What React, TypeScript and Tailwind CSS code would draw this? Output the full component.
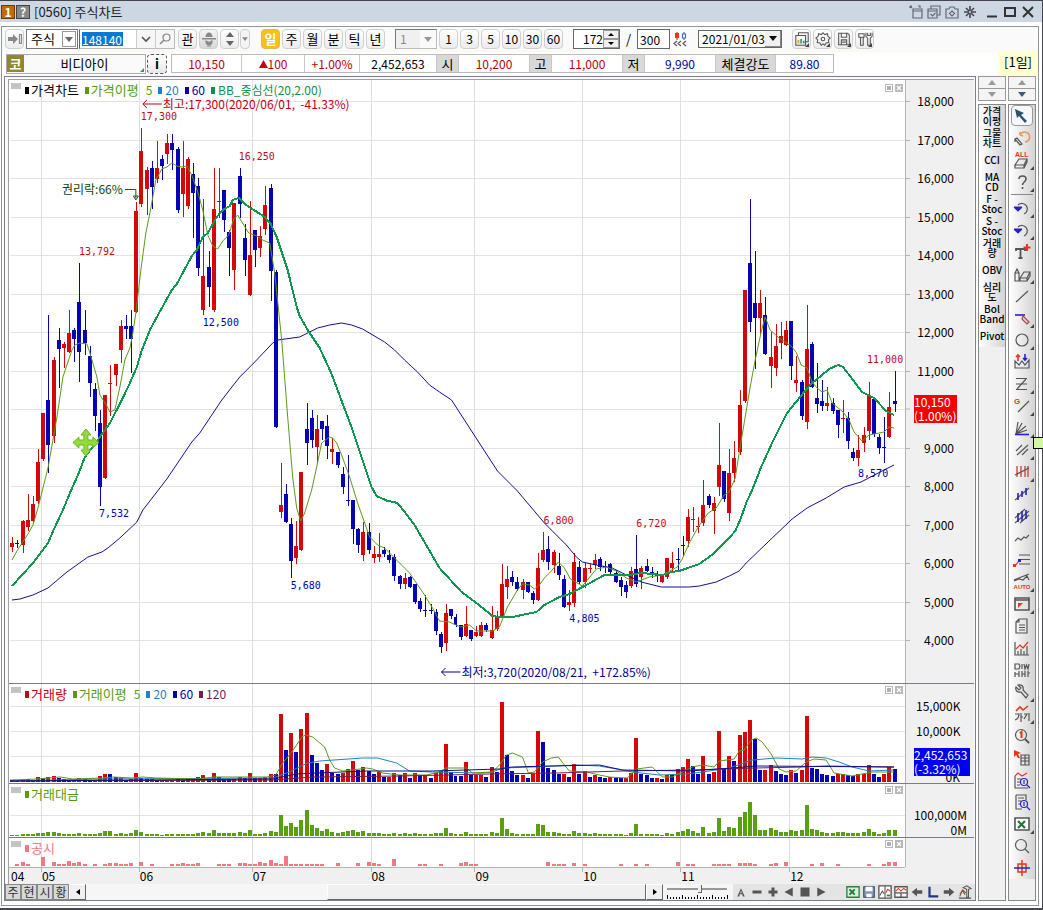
import type { ReactNode } from "react";

/* ---------- data ---------- */

const FIRST_X = 12.2;
const STEP = 5.166;
const xAt = (i: number) => Math.round(FIRST_X + STEP * i);

/* colour, high, body top, body bottom, low */
const CANDLES = `r537,543,547,551 b540,543,544,547 r520,521,545,552 r494,520,527,530 r496,504,521,521 r449,462,501,503
r413,413,459,460 b315,400,445,472 r357,360,436,442 b328,340,349,387 r342,344,348,367 r310,333,352,352
b328,330,339,361 b263,302,352,381 b310,330,343,354 b346,356,383,396 b383,389,416,430 b410,423,487,505
r395,395,478,478 r365,383,384,415 r364,364,375,385 r320,326,350,362 b315,326,329,338 b310,326,339,372
r202,211,312,312 r128,151,204,206 r167,170,189,214 b161,168,187,208 r141,168,179,182 b155,159,166,179
r134,143,154,163 b134,143,150,169 b147,149,210,212 r141,168,194,216 r157,159,206,208 b163,174,193,237
b178,186,268,275 r199,276,310,314 b251,267,287,306 r168,209,310,311 r168,201,202,217 b190,190,220,231
b230,232,248,275 r203,203,270,289 b168,176,204,217 b224,238,260,275 r201,255,295,295 b230,230,250,266
r226,236,248,256 r186,205,229,234 b184,188,271,300 b270,272,427,427 r463,505,512,517 b484,494,522,522
b518,524,561,577 r521,546,558,563 r472,472,550,550 b403,429,443,464 b410,418,440,447 r415,429,447,462
b421,421,429,439 b415,426,446,458 r438,449,452,463 b452,452,465,467 b467,474,487,493 b455,500,501,505
b500,500,529,543 b528,529,545,552 r522,532,555,560 b523,532,550,553 r546,554,558,562 r533,554,557,561
b547,550,554,556 b550,555,560,562 b554,557,576,580 b575,576,584,588 r573,578,584,588 b576,577,587,587
b584,584,602,603 b598,601,609,611 b595,610,611,616 b604,610,611,613 b609,612,631,634 b632,634,647,652
r604,613,643,650 b609,609,616,618 b614,617,625,626 b625,625,637,639 r606,624,636,636 b630,630,639,640
r626,632,636,636 r622,625,636,636 b623,625,630,631 r606,630,638,638 r611,616,629,630 r564,584,616,616
r566,579,587,598 b571,577,582,585 b577,582,589,590 r579,582,590,598 b582,582,592,592 b591,593,600,603
r553,568,600,600 r532,550,560,561 b536,549,562,569 r550,552,565,572 b553,566,575,579 b575,579,607,607
r590,602,605,610 r553,562,603,606 b561,567,582,583 r563,568,582,587 r564,568,569,572 r554,560,565,568
b557,559,567,570 b561,566,567,572 b563,564,572,573 b570,573,582,582 b577,580,587,595 b581,585,592,597
r567,571,586,587 b535,569,584,586 r566,568,577,588 b559,566,571,571 b567,572,574,577 b571,574,576,581
r574,574,582,582 r558,558,577,578 r552,563,568,570 b548,559,560,571 b536,545,546,555 r509,517,541,546
r507,519,520,531 r517,526,527,532 r480,505,523,525 b494,496,505,507 r497,503,511,533 r423,465,487,495
b471,471,499,501 r449,473,513,520 r441,458,473,481 r390,405,452,454 r290,290,401,402 b199,263,322,331
b251,303,318,368 r290,303,318,333 b297,315,354,354 r332,357,366,387 r324,346,368,375 r322,336,343,358
r321,330,345,345 b321,321,366,379 r356,380,383,391 b380,382,416,419 r305,349,422,428 b342,344,387,387
b363,398,404,412 b380,401,406,410 r387,403,406,410 b398,403,411,413 b410,410,425,437 r400,418,419,432
b412,418,441,448 b448,452,458,460 r435,450,458,465 r427,435,443,451 r382,396,431,439 b399,399,434,436
b434,437,448,453 b417,447,448,462 r392,407,437,437 b371,401,404,411`
  .split(/\s+/)
  .map((s) => ({ up: s[0] === "r", v: s.slice(1).split(",").map(Number) }));

const VOLUMES = [
  1.5, 1, 2.7, 2.5, 1.7, 4.7, 3.7, 5, 5.7, 4, 3, 2, 2, 3.5, 3, 2, 2, 5.5, 7.7, 7.5, 4.3, 4.5, 2, 3, 8.7, 4, 3, 3, 2, 2, 2, 2,
  3, 2, 2.5, 2.5, 4.5, 6.5, 3, 8.7, 4.5, 3, 2.5, 3, 5, 4, 8.7, 4, 4, 5, 7.5, 7.3, 67.7, 31.7, 48.7, 29.7, 52.7, 68.7, 26.7,
  18.7, 11.7, 17.7, 9, 8, 9, 12.5, 20.7, 12, 14.7, 11, 7.7, 10, 5, 5, 9, 6.5, 9, 4, 8.7, 6.5, 7, 4, 9, 11, 37.7, 9.5, 6, 5.7,
  19.7, 7, 7, 7, 5, 14.7, 10, 79.7, 27, 10.7, 7, 7, 4, 8, 50.7, 39.7, 14, 12, 8, 8, 5, 17.7, 8, 10.7, 5, 7, 5, 4, 4.5, 4, 3.5,
  3.5, 9, 43.7, 8, 7, 4, 4, 3, 7, 6.5, 12.7, 14.7, 22.7, 15.7, 8, 25.7, 8, 10, 50.7, 14, 25.7, 20.7, 46.7, 49.7, 61.7, 42.7,
  12, 12, 16.7, 11, 8, 7, 12, 9, 12, 65.7, 14, 12.7, 8, 7, 6, 8, 8, 7, 6, 7.5, 8, 16.7, 8, 5, 8, 14.5, 12.7,
];

const TURNOVER = [
  1, 1, 2, 2, 2, 3, 3, 4, 4, 3, 2, 2, 2, 3, 2, 2, 2, 3, 5, 5, 2, 3, 2, 3, 6, 4, 2, 2, 2, 1, 2, 2, 2, 2, 2, 2, 3, 4, 3, 6, 3, 3, 3,
  3, 4, 3, 6, 2, 2, 3, 5, 4, 21, 10, 13, 9, 16, 26, 11, 8, 5, 7, 4, 3, 4, 5, 6, 4, 5, 3, 3, 3, 2, 2, 3, 2, 3, 2, 3, 2, 2, 2, 3,
  3, 8, 3, 2, 2, 4, 2, 2, 2, 2, 4, 3, 18, 7, 3, 2, 2, 2, 2, 12, 11, 4, 4, 3, 2, 2, 5, 3, 3, 2, 3, 2, 2, 2, 2, 2, 1, 3, 12, 2, 2,
  2, 2, 1, 3, 2, 4, 5, 7, 5, 3, 9, 3, 4, 18, 5, 9, 8, 19, 24, 34, 21, 6, 6, 8, 6, 4, 4, 6, 5, 6, 31, 7, 6, 4, 3, 3, 4, 4, 3, 3,
  3, 4, 7, 4, 2, 3, 6, 6,
];

const NOTICES: [number, number][] = [
  [1, 2], [2, 4], [3, 2], [6, 9], [8, 4], [9, 2], [10, 2], [11, 5], [12, 3], [13, 4], [14, 2], [16, 2], [18, 2], [19, 3], [20, 3],
  [21, 2], [22, 2], [23, 3], [25, 4], [27, 2], [31, 2], [32, 2], [33, 3], [34, 2], [35, 2], [36, 3], [40, 2], [41, 2], [42, 2],
  [44, 3], [45, 3], [46, 2], [47, 2], [48, 4], [49, 3], [50, 6], [51, 3], [52, 2], [53, 10], [54, 2], [55, 2], [56, 2], [57, 2],
  [58, 2], [59, 2], [60, 2], [63, 3], [67, 3], [69, 4], [70, 3], [71, 2], [74, 7], [79, 2], [80, 2], [83, 2], [87, 3], [88, 4],
  [89, 2], [90, 2], [104, 4], [105, 2], [106, 2], [107, 2], [109, 3], [111, 2], [118, 2], [121, 2], [123, 2], [129, 4], [131, 2],
  [132, 2], [136, 2], [137, 2], [138, 2], [139, 2], [141, 3], [142, 3], [143, 3], [144, 2], [147, 2], [148, 3], [150, 4],
  [155, 2], [157, 3], [160, 2], [166, 2], [169, 2], [170, 4], [171, 4],
];

const MA5 =
  "12,560 17,551 22,543 28,534 33,525 38,508 43,488 48,468 53,440 57,417 63,377 72,350 75,345 80,343 87,344 90,353 97,377 100,395 107,406 110,412 115,410 120,387 125,360 130,348 133,333 136,313 141,270 146,233 151,208 156,180 162,169 167,167 172,163 177,166 182,167 187,166 192,175 198,192 203,210 208,235 213,246 218,249 223,241 229,235 234,219 238,215 244,225 249,233 257,236 263,240 270,243 275,273 282,340 288,417 293,477 297,508 301,521 305,513 312,490 317,467 322,443 330,437 333,438 337,443 342,455 350,477 358,503 363,517 370,537 378,545 385,548 397,560 410,573 425,595 433,608 440,621 450,622 461,627 470,625 477,631 493,631 500,627 508,607 518,590 523,584 530,585 535,589 540,585 545,578 552,571 559,562 565,568 571,579 583,586 588,580 597,569 607,567 617,571 627,578 637,582 650,577 663,575 678,567 683,559 690,543 699,527 709,513 717,508 725,495 730,492 736,478 740,453 745,423 751,387 756,360 762,332 766,317 771,330 780,338 792,346 797,352 802,365 808,368 813,382 818,388 823,392 828,390 833,403 844,412 850,420 855,432 863,441 870,435 885,432 890,427 895,428";
const MA20 =
  "12,586 33,563 48,543 55,527 63,510 70,493 78,475 85,457 100,437 110,423 122,400 130,383 137,367 142,350 150,330 157,317 172,290 177,284 192,256 197,250 203,237 208,233 217,217 223,210 230,206 233,200 239,198 245,204 265,217 271,224 277,237 288,270 297,307 300,316 308,330 320,348 332,374 342,401 353,430 363,460 372,487 377,496 388,501 395,502 399,504 415,525 440,568 462,592 477,603 493,616 500,617 513,617 537,612 545,605 560,597 570,594 587,585 605,575 630,575 642,573 663,575 672,572 680,571 700,564 714,554 730,538 736,531 741,520 747,503 753,490 762,467 772,445 788,413 805,392 813,383 823,375 830,369 839,365 844,367 863,392 875,398 887,411 895,415";
const MA60 =
  "12,600 20,599 33,595 48,588 67,572 88,557 102,552 108,548 120,538 137,522 143,510 157,492 167,479 192,442 200,433 222,400 240,377 255,362 273,343 278,340 300,337 318,328 330,325 342,323 352,325 363,329 385,342 395,350 405,360 418,372 430,385 440,392 452,400 498,471 518,491 545,523 567,545 577,557 583,562 597,565 613,568 627,575 642,582 662,587 690,587 700,586 717,582 730,576 740,571 747,563 772,539 793,519 808,508 827,498 845,487 862,482 883,471 895,465";

const VMA5 =
  "10,780 37,779 60,777 73,779 103,778 113,777 133,778 143,777 157,778 200,779 213,777 233,777 267,777 276,775 283,763 288,757 295,748 302,737 306,735 313,737 325,747 330,760 335,768 343,771 353,770 367,768 373,769 383,773 400,775 427,775 440,772 446,768 467,768 473,773 493,772 500,765 507,755 513,753 523,757 529,773 535,772 543,762 552,758 559,757 565,765 570,771 587,772 600,775 610,777 628,778 637,769 653,767 663,777 673,777 683,772 693,767 703,765 715,767 720,761 735,759 740,751 745,750 752,740 757,738 763,742 772,754 780,769 787,772 797,771 807,762 815,759 827,760 835,773 853,776 873,772 890,772 895,772";
const VMA20 =
  "10,781 100,779 273,778 287,773 308,763 320,761 363,758 378,758 397,763 410,771 433,772 483,773 493,772 503,768 533,767 557,766 577,765 600,766 623,770 633,772 660,775 687,774 703,772 730,768 753,760 777,758 803,759 813,757 827,758 840,762 853,767 870,771 895,770";
const VMA60 = "10,781 273,779 297,774 317,773 367,771 433,771 500,769 513,767 550,766 600,765 623,770 690,771 733,768 757,766 895,767";
const VMA120 = "10,781 273,780 313,777 400,776 447,775 490,774 557,773 623,771 690,770 757,768 803,767 827,766 895,767";

const MONTHS: [number, string][] = [[41, "05"], [139, "06"], [252, "07"], [371, "08"], [475, "09"], [583, "10"], [681, "11"], [790, "12"]];

/* ---------- chart pieces ---------- */

const X0 = 9;
const W = 897;
const left = (x: number) => `${((x - X0) / W) * 100}%`;

function Plot({ top, height, rows, children }: { top: number; height: number; rows: number[]; children: ReactNode }) {
  return (
    <svg
      className="absolute inset-0 h-full w-full"
      viewBox={`${X0} ${top} ${W} ${height}`}
      preserveAspectRatio="none"
      shapeRendering="crispEdges"
      aria-hidden="true"
    >
      {rows.map((y) => (
        <rect key={y} x={10} y={y} width={W} height={1} fill="#e3e3e3" />
      ))}
      {MONTHS.map(([x]) => (
        <rect key={x} x={x} y={top} width={1} height={height} fill="#dfdfdf" />
      ))}
      {children}
    </svg>
  );
}

function Line({ points, color, width = 1 }: { points: string; color: string; width?: number }) {
  return <polyline points={points} fill="none" stroke={color} strokeWidth={width} strokeLinejoin="round" />;
}

function PanelButtons() {
  return (
    <div className="absolute top-0.5 right-0.5 flex gap-0.5">
      <button aria-label="패널 최대화" className="flex size-2 items-center justify-center border border-[#b8b8b8] bg-white">
        <span className="size-1 bg-[#b0b0b0]" />
      </button>
      <button aria-label="패널 닫기" className="flex size-2 items-center justify-center bg-[#b8b8b8]">
        <svg viewBox="0 0 8 8" className="size-2">
          <path d="M2 2l4 4M6 2l-4 4" stroke="#fff" strokeWidth="1.2" />
        </svg>
      </button>
    </div>
  );
}

function Legend({ items }: { items: { mark?: string; color: string; text: string; small?: boolean }[] }) {
  return (
    <div className="absolute top-0.5 left-0.5 flex items-start">
      <span className="mt-px h-1.5 w-2.5 bg-[#c4c4c4]" />
      <div className="ml-1 flex items-center gap-1.5 text-[13px] leading-4">
        {items.map((it, i) => (
          <span key={i} className={`flex items-center gap-0.5 ${it.color}`}>
            {it.mark && <span className={`h-[7px] w-1 ${it.mark}`} />}
            <span className={it.small ? "pl-px text-xs leading-4" : ""}>{it.text}</span>
          </span>
        ))}
      </div>
    </div>
  );
}

function Note({ x, y, className, children }: { x: number; y: number; className: string; children: ReactNode }) {
  return (
    <span
      className={`absolute -translate-y-1/2 leading-3 whitespace-pre ${className}`}
      style={{ left: left(x), top: `${((y - 80) / 603) * 100}%` }}
    >
      {children}
    </span>
  );
}

const PRICE_TAG = "font-['DejaVu_Sans_Mono',monospace] text-[10px]";

function PricePanel() {
  const rows = Array.from({ length: 15 }, (_, i) => Math.round(101 + i * 38.5));
  return (
    <section className="flex min-h-[400px] flex-1" aria-label="가격차트">
      <div className="relative flex-1 bg-white">
        <Plot top={80} height={603} rows={rows}>
          {CANDLES.map(({ up, v: [h, t, b, l] }, i) => {
            const x = xAt(i);
            const c = up ? "#d40808" : "#0404b4";
            return (
              <g key={i} fill={c}>
                <rect x={x} y={h} width={1} height={l - h + 1} />
                <rect x={x - 2} y={t} width={4} height={Math.max(1, b - t)} />
              </g>
            );
          })}
          <Line points={MA60} color="#10108c" />
          <Line points={MA5} color="#5a9a18" />
          <Line points={MA20} color="#109850" width={2} />
          <path d="M143 104h19M143 104l4-4M143 104l4 4" stroke="#c00010" fill="none" />
          <path d="M442 672h19M442 672l4-4M442 672l4 4" stroke="#000090" fill="none" />
          <path d="M125 189.500h11v9M133.500 196l2.500 4 2.500-4z" stroke="#1c5a1c" fill="none" />
          <path
            d="M86 429l5 6h-3v5h5v-3l6 5.500-6 5.500v-3h-5v5h3l-5 6-5-6h3v-5h-5v3l-6-5.500 6-5.500v3h5v-5h-3z"
            fill="#8fdc3c"
            stroke="#6cb81e"
            shapeRendering="auto"
          />
        </Plot>
        <Legend
          items={[
            { mark: "bg-black", color: "text-black", text: "가격차트" },
            { mark: "bg-[#5a9a10]", color: "text-[#5a9a10]", text: "가격이평" },
            { color: "text-[#5a9a10]", text: "5", small: true },
            { mark: "bg-[#2080c8]", color: "text-[#2080c8]", text: "20", small: true },
            { mark: "bg-[#0000a8]", color: "text-[#0000a8]", text: "60", small: true },
            { mark: "bg-[#109048]", color: "text-[#109048]", text: "BB_중심선(20,2.00)", small: true },
          ]}
        />
        <div className="absolute top-0.5 right-0 h-3 w-6">
          <PanelButtons />
        </div>
        <Note x={163} y={104} className="text-xs text-[#c00010]">최고:17,300(2020/06/01,  -41.33%)</Note>
        <Note x={462} y={672} className="text-xs text-[#000090]">최저:3,720(2020/08/21,  +172.85%)</Note>
        <Note x={62} y={189} className="text-xs text-[#104810]">권리락:66%</Note>
        {(
          [
            [141, 117, "17,300"], [79, 252, "13,792"], [239, 157, "16,250"], [544, 521, "6,800"], [637, 524, "6,720"], [868, 360, "11,000"],
          ] as [number, number, string][]
        ).map(([x, y, s]) => (
          <Note key={s} x={x} y={y} className={`${PRICE_TAG} text-[#c80818]`}>{s}</Note>
        ))}
        {(
          [
            [203, 323, "12,500"], [99, 514, "7,532"], [291, 586, "5,680"], [570, 619, "4,805"], [859, 474, "8,570"],
          ] as [number, number, string][]
        ).map(([x, y, s]) => (
          <Note key={s} x={x} y={y} className={`${PRICE_TAG} text-[#0000b0]`}>{s}</Note>
        ))}
      </div>
      <div className="relative w-[69px] border-l border-[#b4b4b4] bg-[#f0f0f0] text-xs">
        {rows.map((y, i) => (
          <div
            key={y}
            className="absolute inset-x-0 flex -translate-y-1/2 items-center leading-4"
            style={{ top: `${((y - 80) / 603) * 100}%` }}
          >
            <span className="h-px w-1 bg-[#b4b4b4]" />
            {i !== 8 && <span className="w-11 text-right">{18 - i},000</span>}
          </div>
        ))}
        <div className="absolute top-[52.200%] left-2 w-[43px] bg-[#f80000] leading-3.5 text-white">
          10,150
          <br />
          (1.00%)
        </div>
      </div>
    </section>
  );
}

function VolumePanel() {
  return (
    <section className="flex h-[100px] border-t border-[#7c7c84]" aria-label="거래량">
      <div className="relative flex-1 bg-white">
        <Plot top={684} height={99} rows={[706, 731, 756]}>
          {VOLUMES.map((v, i) => (
            <rect
              key={i}
              x={xAt(i) - 2}
              y={781.6 - v}
              width={4}
              height={v}
              fill={i === 0 || v < VOLUMES[i - 1] ? "#0404b4" : "#d40808"}
            />
          ))}
          <Line points={VMA20} color="#2080c0" />
          <Line points={VMA5} color="#5a9a18" />
          <Line points={VMA120} color="#702050" />
          <Line points={VMA60} color="#10108c" />
        </Plot>
        <Legend
          items={[
            { mark: "bg-[#c80010]", color: "text-[#c80010]", text: "거래량" },
            { mark: "bg-[#5a9a10]", color: "text-[#5a9a10]", text: "거래이평" },
            { color: "text-[#5a9a10]", text: "5", small: true },
            { mark: "bg-[#2080c8]", color: "text-[#2080c8]", text: "20", small: true },
            { mark: "bg-[#0000a8]", color: "text-[#0000a8]", text: "60", small: true },
            { mark: "bg-[#702050]", color: "text-[#702050]", text: "120", small: true },
          ]}
        />
        <PanelButtons />
      </div>
      <div className="relative w-[69px] border-l border-[#b4b4b4] bg-[#f0f0f0] text-xs leading-4">
        <span className="absolute top-3.5 left-2.5">15,000K</span>
        <span className="absolute top-[39px] left-2.5">10,000K</span>
        <span className="absolute right-3.5 -bottom-0.5">0K</span>
        <div className="absolute top-16 left-2 w-[56px] bg-[#0000f0] leading-3.5 text-white">
          2,452,653
          <br />
          (-3.32%)
        </div>
      </div>
    </section>
  );
}

function TurnoverPanel() {
  return (
    <section className="flex h-[54px] border-t border-[#7c7c84]" aria-label="거래대금">
      <div className="relative flex-1 bg-white">
        <Plot top={784} height={53} rows={[815]}>
          {TURNOVER.map((v, i) => (
            <rect key={i} x={xAt(i) - 2} y={836 - v} width={4} height={v} fill="#58a010" />
          ))}
        </Plot>
        <Legend items={[{ mark: "bg-[#5a9a10]", color: "text-[#5a9a10]", text: "거래대금" }]} />
        <PanelButtons />
      </div>
      <div className="relative w-[69px] border-l border-[#b4b4b4] bg-[#f0f0f0] text-xs leading-4">
        <span className="absolute right-[7px] bottom-3.5">100,000M</span>
        <span className="absolute right-[7px] -bottom-px">0M</span>
      </div>
    </section>
  );
}

function NoticePanel() {
  return (
    <section className="flex h-[30px] border-t border-[#7c7c84]" aria-label="공시">
      <div className="relative flex-1 bg-white">
        <Plot top={838} height={29} rows={[]}>
          {NOTICES.map(([i, v]) => (
            <rect key={i} x={xAt(i) - 2} y={866 - v} width={4} height={v} fill="#f07880" />
          ))}
        </Plot>
        <Legend items={[{ mark: "bg-[#f07880]", color: "text-[#f07880]", text: "공시" }]} />
        <PanelButtons />
      </div>
      <div className="w-[69px] border-l border-[#b4b4b4] bg-[#f0f0f0]" />
    </section>
  );
}

function DateAxis() {
  return (
    <div className="flex h-[17px] bg-[#f0f0f0] text-xs leading-4">
      <div className="relative flex-1 border-t border-[#b4b4b4]">
        <span className="absolute left-0.5">04</span>
        {MONTHS.map(([x, m]) => (
          <span key={m} className="absolute" style={{ left: left(x) }}>
            <span className="absolute top-0 left-0 h-1 w-px bg-[#b4b4b4]" />
            <span className="pl-px">{m}</span>
          </span>
        ))}
      </div>
      <div className="w-[69px]" />
    </div>
  );
}

/* ---------- icons ---------- */

function Icon({ children, size = "size-4", box = 18 }: { children: ReactNode; size?: string; box?: number }) {
  return (
    <svg viewBox={`0 0 ${box} ${box}`} className={`${size} shrink-0`} fill="none" stroke="#555" strokeWidth="1.2" aria-hidden="true">
      {children}
    </svg>
  );
}

const R = "#e03818";
const B = "#2820c8";

const MINI_TEXT = "font-['Liberation_Sans',sans-serif] font-bold";

const TOOLS: { name: string; more?: boolean; icon: ReactNode }[] = [
  { name: "되돌리기 그리기", icon: <><path d="M7 6a5 5 0 1 1 5 7M7 6l0-3M7 6l3 1" stroke="#e89850" strokeWidth="1.500" /><path d="M2 10l2-1 5 6-2 1zM2 10v3" /></> },
  { name: "전체 지우기", more: true, icon: <><text x="2" y="6" fontSize="7" stroke="none" fill={R} className={MINI_TEXT}>ALL</text><path d="M2 14l4-6h8l-3 6zM2 14v3h9v-3M11 17l3-6V8" /></> },
  { name: "도움말", more: true, icon: <path d="M6 6c0-4 7-4 7 0 0 3-3.500 3-3.500 6M9.500 14v2" strokeWidth="1.600" /> },
  { name: "실행 취소", more: true, icon: <><path d="M5 6a5.500 5.500 0 1 1 6 9" /><path d="M1 8h8M2 9h6l-3 3z" stroke={B} fill={B} /></> },
  { name: "다시 실행", more: true, icon: <><path d="M5 6a5.500 5.500 0 1 1 6 9" /><path d="M1 8h8M2 9h6l-3 3z" stroke={B} fill={B} /></> },
  { name: "문자", icon: <><path d="M3 8V6h9v2M7.500 6v9M5.500 15h4" strokeWidth="1.800" /><path d="M14 1v7M10.500 4.500h7" stroke={R} strokeWidth="2" /></> },
  { name: "선 지우개", more: true, icon: <path d="M2 8l2-4 2 4v8H2zM2 8h4M7 13l4-6h6l-3 6zM7 13v3h7v-3M14 16l3-5V7" /> },
  { name: "추세선", icon: <path d="M3 15L15 4" /> },
  { name: "지우개", more: true, icon: <><path d="M2 6h10" stroke={B} strokeWidth="1.600" /><path d="M10 7l6 6-2 2-5-5z" stroke="#b04050" /></> },
  { name: "원", more: true, icon: <circle cx="9" cy="9" r="6" /> },
  { name: "패턴", icon: <><path d="M2 15V8l4 4 3-4 3 4 4-5v8z" /><path d="M5 8V2M3 4l2-2 2 2" stroke={R} strokeWidth="1.600" /><path d="M12 1v6M10 5l2 2 2-2" stroke={B} strokeWidth="1.600" /></> },
  { name: "수평 추세", more: true, icon: <path d="M3 3.500h11M3 9h11M3 14.500h11M13 4L4 14" /> },
  { name: "각도선", more: true, icon: <><text x="1" y="7" fontSize="8" stroke="none" fill={R} className={MINI_TEXT}>G</text><path d="M5 15L16 4" /></> },
  { name: "부채꼴", more: true, icon: <><path d="M3 15L5 3M3 15l6-11M3 15l10-8M3 15l11-4" /><path d="M2 15.500h14" stroke={B} strokeWidth="1.600" /></> },
  { name: "평행선", more: true, icon: <path d="M3 10l6-6M4 14L15 4M9 14l6-6" /> },
  { name: "주기선", more: true, icon: <><path d="M4 3v11M8 3v11M12 3v11M15 3v11" stroke="#c03828" /><path d="M2 12L16 5" /></> },
  { name: "회귀선", icon: <><path d="M2 15L16 3" /><path d="M5 8v7M9 6v6M13 3v7" stroke={B} strokeWidth="1.600" /></> },
  { name: "회귀 채널", icon: <><path d="M2 11L12 2M2 16L16 4M7 16l9-8" /><path d="M5 6v9M9 4v10M13 3v9" stroke={B} strokeWidth="1.600" /></> },
  { name: "지그재그", icon: <path d="M2 12l3-3 3 2 3-3 2 1 3-3" /> },
  { name: "가격선", icon: <><path d="M6 4h11M8 8.500h9M6 13h11" /><path d="M2 15l4-5" stroke={R} /><path d="M5 8h3v3H5z" fill={B} stroke="none" /><path d="M0 13h3v3H0z" fill={R} stroke="none" /></> },
  { name: "자동 추세", more: true, icon: <><path d="M1 7L16 1M1 8l5-2 4 1 4-4 2 4" /><text x="9" y="16" fontSize="6" textAnchor="middle" stroke="none" fill={R} className={MINI_TEXT}>AUTO</text></> },
  { name: "창", more: true, icon: <><path d="M2 3h14v12H2zM2 5h14" strokeWidth="1.600" /><path d="M5 8h5l-5 5z" fill={R} stroke="none" /></> },
  { name: "문서", icon: <path d="M6 2h8v14H3V5zM6 2v3H3M6 8h6M6 10.500h6M6 13h6" /> },
  { name: "비교차트", icon: <><path d="M2 3v13h14M5 16v-4M8 16v-6M11 16v-4M14 16V7" /><path d="M3 10l4-4 3 3 5-6" stroke={R} /></> },
  { name: "매매표시", icon: <path d="M2 3h4l1 2-1 3H2zM9 3v5M11 3l1 5 1.500-4 1.500 4 1-5M2 11v5M2 13h4M6 10v6M9 10v6M9 13h3M12 10v6M15 10v6M15 12h2" /> },
  { name: "설정", more: true, icon: <path d="M3 4l3 3 2-2-3-3c4-1 6 2 5 5l5 5-2 3-5-6c-4 1-6-2-5-5z" /> },
  { name: "가격 표시", more: true, icon: <><path d="M3 6l4-4 3 3 5-4" stroke={R} strokeWidth="1.600" /><path d="M2 9h4c0 3-1 5-4 6M8 8v9M8 12h2M11 9h3l-3 5M16 8v8" /></> },
  { name: "종목 검색", icon: <><circle cx="8" cy="8" r="5.500" /><path d="M12 12l4 4" strokeWidth="2" /><path d="M7 6.500l1.500-1.500v6" stroke={R} strokeWidth="2" /></> },
  { name: "영역 선택", icon: <><path d="M8 6h8v10H8zM8 9h8M8 12h8M12 6v10" /><path d="M1 1l7 3-3 1 2 4-2 0-2-3-2 2z" fill={R} stroke="none" /></> },
  { name: "차트 검색", icon: <><path d="M2 5v12h13M4 8h4M4 11h3M4 14h3" /><path d="M2 5l3-3 4 3 5-3" stroke={R} /><circle cx="11" cy="11" r="3.500" stroke={B} /><path d="M14 14l3 3M11 9v4" stroke={B} /></> },
  { name: "목록 검색", icon: <><path d="M3 2h10v5M3 2v14h6M5 5h6M5 8h3M5 11h2" /><circle cx="11" cy="11" r="3.500" stroke={B} /><path d="M14 14l3 3M11 9v4" stroke={B} /></> },
  { name: "엑셀", more: true, icon: <><path d="M2 3h14v12H2z" strokeWidth="1.600" fill="#fff" /><path d="M5 6l7 7M12 6l-7 7" stroke="#1f7a3a" strokeWidth="2.200" /></> },
  { name: "확대", icon: <><circle cx="8" cy="8" r="5.500" /><path d="M12 12l4 4" /></> },
  { name: "십자선", icon: <><path d="M5 5h8v8H5zM9 1v16" stroke={R} strokeWidth="1.500" /><path d="M1 9h16" stroke={B} strokeWidth="1.500" /></> },
];

/* ---------- toolbar ---------- */

const BTN = "flex h-5 w-[19px] shrink-0 items-center justify-center rounded border leading-4";
const TONES = {
  plain: "border-[#cfcfcf] bg-linear-to-b from-white to-[#ececec]",
  dark: "border-[#cfcfcf] bg-linear-to-b from-[#f4f4f4] to-[#d8d8d8]",
  active: "border-[#d8b860] bg-[#fcc010] font-bold text-white",
};

function TBtn({ label, tone = "plain", className = "text-[13px]", children }: { label: string; tone?: keyof typeof TONES; className?: string; children?: ReactNode }) {
  return (
    <button aria-label={label} className={`${BTN} ${TONES[tone]} ${className}`}>
      {children ?? label}
    </button>
  );
}

function Down({ fill = "#666" }: { fill?: string }) {
  return (
    <svg viewBox="0 0 8 5" className="h-[5px] w-2" aria-hidden="true">
      <path d="M0 0h8L4 5z" fill={fill} />
    </svg>
  );
}

function Up({ fill = "#666" }: { fill?: string }) {
  return (
    <svg viewBox="0 0 8 5" className="h-[5px] w-2" aria-hidden="true">
      <path d="M0 5h8L4 0z" fill={fill} />
    </svg>
  );
}

function Corner() {
  return (
    <svg viewBox="0 0 5 5" className="absolute right-px bottom-px size-1" aria-hidden="true">
      <path d="M5 0v5H0z" fill="#444" />
    </svg>
  );
}

function Toolbar() {
  return (
    <div className="flex h-6 shrink-0 items-center bg-[#fafafa] pl-[3px]">
      <TBtn label="종목창 열기">
        <Icon box={16}>
          <path d="M1 6h5V3l5 5-5 5v-3H1z" fill="#888" stroke="none" />
          <path d="M12.500 3.500h2v9h-2z" stroke="#888" />
        </Icon>
      </TBtn>
      <div className="relative ml-0.5 h-5 w-[52px] border border-[#777] bg-white">
        <select aria-label="상품 구분" className="block h-full w-full appearance-none bg-transparent pl-1 text-[13px] leading-4">
          <option>주식</option>
        </select>
        <span className="pointer-events-none absolute inset-y-px right-px flex w-3.5 items-center justify-center border border-[#999]">
          <Down />
        </span>
      </div>
      <div className="ml-px flex h-5 items-center border border-[#bbb] border-l-[#666] bg-white pl-0.5">
        <input aria-label="종목코드" defaultValue="148140" className="h-3.5 w-[41px] bg-[#0a78d0] text-xs leading-3 text-white" />
        <button aria-label="종목 목록" className="ml-[13px] flex h-full w-[19px] items-center justify-center border-l border-[#ccc] bg-[#f6f6f6]">
          <Icon size="size-3" box={12}><path d="M2 4l4 4 4-4" strokeWidth="1.600" /></Icon>
        </button>
        <button aria-label="종목 찾기" className="flex h-full w-[19px] items-center justify-center border-l border-[#ccc] bg-[#f6f6f6]">
          <Icon size="size-3" box={12}><circle cx="7.500" cy="4.500" r="3.500" stroke="#888" /><path d="M5 7l-4 4" stroke="#888" strokeWidth="1.600" /></Icon>
        </button>
      </div>
      <div className="ml-[3px] flex gap-0.5">
        <TBtn label="관" />
        <TBtn label="투자자" tone="dark">
          <Icon box={16}><path d="M4.500 6c0-6 7-6 7 0zM1 7h14v1.500H1z" fill="#888" stroke="none" /><path d="M5 10c0 5 6 5 6 0l-3 1.500zM6 15h4" fill="#888" stroke="#888" /></Icon>
        </TBtn>
        <TBtn label="이전 다음 종목" className="flex-col gap-1">
          <Up />
          <Down />
        </TBtn>
        <button aria-label="더보기" className="-ml-px flex h-5 w-2.5 items-center justify-center rounded border border-[#cfcfcf] bg-[#f4f4f4]">
          <svg viewBox="0 0 8 5" className="h-1 w-1.5"><path d="M0 0h8L4 5z" fill="#888" /></svg>
        </button>
      </div>
      <div className="ml-[11px] flex gap-0.5">
        <TBtn label="일" tone="active" />
        {["주", "월", "분", "틱", "년"].map((t) => (
          <TBtn key={t} label={t} />
        ))}
      </div>
      <div className="relative ml-2.5 h-5 w-[42px]">
        <select aria-label="주기 값" disabled className="block h-full w-full appearance-none border border-[#bbb] border-t-[#777] border-l-[#777] bg-[#f0f0f0] pl-1 text-xs text-[#888]">
          <option>1</option>
        </select>
        <span className="pointer-events-none absolute inset-y-px right-px flex w-4 items-center justify-center bg-[#fafafa]">
          <Down fill="#999" />
        </span>
      </div>
      <div className="ml-0.5 flex gap-0.5">
        {["1", "3", "5", "10", "30", "60"].map((t) => (
          <TBtn key={t} label={t} className="text-xs" />
        ))}
      </div>
      <div className="ml-2.5 flex h-5 w-[47px] border border-[#666] bg-white">
        <input aria-label="표시 봉수" defaultValue="172" className="w-[29px] bg-transparent text-right text-xs" />
        <div className="flex flex-1 flex-col bg-[#f0f0f0]">
          <button aria-label="봉수 증가" className="flex flex-1 items-center justify-center border border-[#999]">
            <svg viewBox="0 0 6 3" className="h-[3px] w-1.5"><path d="M0 3h6L3 0z" /></svg>
          </button>
          <button aria-label="봉수 감소" className="flex flex-1 items-center justify-center border border-[#999]">
            <svg viewBox="0 0 6 3" className="h-[3px] w-1.5"><path d="M0 0h6L3 3z" /></svg>
          </button>
        </div>
      </div>
      <span className="px-1.5 text-[13px]">/</span>
      <input aria-label="전체 봉수" defaultValue="300" className="h-5 w-[33px] border border-[#666] bg-white pl-0.5 text-xs leading-4" />
      <button aria-label="봉 조절" className="ml-0.5">
        <Icon box={16}>
          <path d="M5 1v8" stroke={R} /><path d="M3 2h4v5H3z" fill={R} stroke="none" />
          <path d="M12 1v8" stroke="#4070b0" /><path d="M10.500 3h3v4h-3z" stroke="#4070b0" fill="#fff" />
          <path d="M5 10l-3 2.500 3 2.500M9 10l-3 2.500 3 2.500M14 10l-3 2.500 3 2.500" />
        </Icon>
      </button>
      <div className="relative ml-2.5 h-[18px] w-[84px] border border-[#666] bg-white">
        <select aria-label="기준일" className="block h-full w-full appearance-none pl-[3px] text-xs leading-4">
          <option>2021/01/03</option>
        </select>
        <span className="pointer-events-none absolute inset-y-0 right-0 flex w-4 items-center justify-center border-r border-b border-[#888] bg-[#f0f0f0]">
          <Down fill="#000" />
        </span>
      </div>
      <div className="ml-2.5 flex gap-0.5">
        <TBtn label="차트 유형" className="relative">
          <Icon box={18}><path d="M5 5V2h11v10h-3M2 5h11v11H2z" /><path d="M5 14v-4" stroke="#e0a020" strokeWidth="2" /><path d="M8 14V9" stroke="#40a070" strokeWidth="2" /><path d="M11 14v-3" stroke="#4080c0" strokeWidth="2" /></Icon>
          <Corner />
        </TBtn>
        <TBtn label="환경설정" className="relative">
          <Icon box={18}><path d="M9 2l2 2 3-1 .5 3L17 8l-2 2 .5 3-3 .5L11 16l-2-1.500L7 16l-1.500-2.500-3-.5L3 10 1 8l2.500-2L4 3l3 1z" /><circle cx="9" cy="9" r="2" /></Icon>
          <Corner />
        </TBtn>
        <TBtn label="저장" className="relative">
          <Icon box={18}><path d="M3 2.500h10l2 2v11H3zM6 3v4h6V3M6 15v-5h6v5M7 12.500h4" /></Icon>
          <Corner />
        </TBtn>
        <TBtn label="도구" className="relative">
          <Icon box={18}><path d="M2 3h6v4H2zM4 7h3v9H4zM10 2v4l2 2v8h3V8l2-2V2M12 2v3h3V2" /></Icon>
          <Corner />
        </TBtn>
      </div>
    </div>
  );
}

function QuoteRow() {
  const red = "text-[#b80010]";
  const navy = "text-[#000098]";
  const cell = "flex items-center justify-center border-r border-[#c8c8c8]";
  const head = `${cell} bg-[#d8d8d8] text-[13px]`;
  return (
    <div className="flex h-[25px] shrink-0 items-center border-y border-[#ffffd4] pl-1 text-xs">
      <div className="flex h-5 w-[140px] items-center border border-[#aaa] bg-[#fafafa]">
        <span className="flex size-[17px] items-center justify-center bg-[#908830] text-[13px] font-bold text-white">코</span>
        <span className="relative flex h-full flex-1 items-center justify-center text-[13px]">
          비디아이
          <svg viewBox="0 0 4 4" className="absolute right-px bottom-px size-1"><path d="M4 0v4H0z" fill="#20a060" /></svg>
        </span>
      </div>
      <button className="mr-1 ml-px h-5 w-5 rounded border border-dashed border-[#555] bg-linear-to-b from-white to-[#e8e8e8] text-[13px] leading-4 font-bold">i</button>
      <div className="flex h-[19px] border border-[#bbb] bg-white">
        <span className={`${cell} w-[70px] ${red}`}>10,150</span>
        <span className={`${cell} w-[63px] ${red}`}>
          <svg viewBox="0 0 9 8" className="h-2 w-[9px]"><path d="M0 8h9L4.500 0z" fill="#c80010" /></svg>
          100
        </span>
        <span className={`${cell} w-[55px] ${red}`}>+1.00%</span>
        <span className={`${cell} w-[77px]`}>2,452,653</span>
        <span className={`${head} w-[22px]`}>시</span>
        <span className={`${cell} w-[71px] ${red}`}>10,200</span>
        <span className={`${head} w-[22px]`}>고</span>
        <span className={`${cell} w-[71px] ${red}`}>11,000</span>
        <span className={`${head} w-[22px]`}>저</span>
        <span className={`${cell} w-[71px] ${navy}`}>9,990</span>
        <span className={`${head} w-[60px]`}>체결강도</span>
        <span className={`flex w-[57px] items-center justify-center ${navy}`}>89.80</span>
      </div>
      <span className="ml-auto flex h-full items-center bg-[#ffffd4] px-1.5 pb-1 text-[13px]">[1일]</span>
    </div>
  );
}

/* ---------- side columns ---------- */

function Pager({ active = false }: { active?: boolean }) {
  return (
    <div className="mb-[3px] flex h-[25px] w-7 flex-col border border-[#999] bg-[#f4f4f4]">
      <button aria-label="위로" className="flex flex-1 items-center justify-center border-b border-[#999]"><Up fill="#999" /></button>
      <button aria-label="아래로" className="flex flex-1 items-center justify-center"><Down fill={active ? "#40587c" : "#999"} /></button>
    </div>
  );
}

const INDICATORS = [["가격", "이평"], ["그물", "차트"], ["CCI"], ["MA", "CD"], ["F -", "Stoc"], ["S -", "Stoc"], ["거래", "량"], ["OBV"], ["심리", "도"], ["Bol", "Band"], ["Pivot"]];

function SideColumns() {
  return (
    <div className="ml-0.5 flex shrink-0 gap-0.5">
      <div className="flex flex-col">
        <Pager />
        <div className="w-7 flex-1 border border-[#888] bg-[#f0f0f0]">
          <div className="bg-linear-to-r from-white to-[#d4d4d4]">
            {INDICATORS.map((lines) => (
              <button key={lines.join(" ")} className="flex h-[22px] w-full flex-col items-center justify-center text-[10px] leading-[10px] font-medium">
                {lines.map((l) => (
                  <span key={l}>{l}</span>
                ))}
              </button>
            ))}
          </div>
        </div>
      </div>
      <div className="flex flex-col">
        <Pager active />
        <div className="w-7 flex-1 border border-[#888] bg-[#f0f0f0]">
          <div className="bg-linear-to-r from-white to-[#d4d4d4]">
            <button aria-label="선택" className="mx-0.5 mb-px flex h-[21px] w-[22px] items-center justify-center rounded-sm border border-[#999] bg-[#f4f8fc]">
              <Icon size="size-[18px]"><path d="M2 2l2 9 2-2 6 7 2-2-6-6 3-2z" fill="#2c5070" stroke="none" /></Icon>
            </button>
            {TOOLS.map((t, i) => (
              <div key={t.name}>
                {i === 3 && <div className="mx-0.5 mt-px mb-0.5 h-px bg-[#888]" />}
                <button aria-label={t.name} className="relative flex h-[22px] w-full items-center justify-center">
                  <Icon size="size-[18px]">{t.icon}</Icon>
                  {t.more && <Corner />}
                </button>
              </div>
            ))}
          </div>
        </div>
      </div>
    </div>
  );
}

/* ---------- bottom bar ---------- */

function BottomBar() {
  const raised = "border border-[#fff] border-r-[#666] border-b-[#666] bg-[#f0f0f0]";
  return (
    <div className="flex h-4 shrink-0 items-stretch bg-[#f6f6f6] text-[13px] leading-3.5">
      {["주", "현", "시", "황"].map((t) => (
        <button key={t} className="flex w-4 items-center justify-center border border-[#888] bg-[#d8d8d8] text-xs leading-3 text-[#333]">
          {t}
        </button>
      ))}
      <button aria-label="왼쪽으로" className={`flex w-[17px] items-center justify-center ${raised}`}>
        <svg viewBox="0 0 4 6" className="h-1.5 w-1"><path d="M4 0v6L0 3z" /></svg>
      </button>
      <div className="flex flex-1 justify-end" role="scrollbar" aria-label="기간 이동" aria-controls="charts" aria-valuenow={100}>
        <div className={`w-[57%] ${raised}`} />
      </div>
      <button aria-label="오른쪽으로" className={`flex w-[17px] items-center justify-center ${raised}`}>
        <svg viewBox="0 0 4 6" className="h-1.5 w-1"><path d="M0 0v6l4-3z" /></svg>
      </button>
      <div className="relative w-[70px] bg-[#f6f6f6] px-1">
        <input
          type="range"
          aria-label="배율"
          defaultValue={56}
          className="absolute top-1 left-1 h-0.5 w-[60px] appearance-none bg-[#999] [&::-webkit-slider-thumb]:h-2 [&::-webkit-slider-thumb]:w-1 [&::-webkit-slider-thumb]:appearance-none [&::-webkit-slider-thumb]:border-r [&::-webkit-slider-thumb]:border-b [&::-webkit-slider-thumb]:border-[#666] [&::-webkit-slider-thumb]:bg-[#f0f0f0]"
        />
        <svg viewBox="0 0 62 4" className="absolute bottom-px left-1 h-1 w-[62px]" shapeRendering="crispEdges" aria-hidden="true">
          {Array.from({ length: 21 }, (_, i) => (
            <rect key={i} x={i * 3} y={i % 5 ? 2 : 0} width={1} height={4} />
          ))}
        </svg>
      </div>
      <div className="flex w-[242px] items-center justify-between bg-[#e4e4e4] pr-0.5">
        <div className="flex">
          {[
            { n: "자동", d: <path d="M3 14L8 3l5 11h-2.500l-1-3h-3l-1 3zM7 9.500h2L8 6z" fillRule="evenodd" /> },
            { n: "축소", d: <path d="M2 6h12v4H2z" /> },
            { n: "확대", d: <path d="M6 2h4v4h4v4h-4v4H6v-4H2V6h4z" /> },
            { n: "이전", d: <path d="M13 2v12L2 8z" /> },
            { n: "정지", d: <path d="M2 2h12v12H2z" /> },
            { n: "재생", d: <path d="M3 2v12l11-6z" /> },
          ].map((b) => (
            <button key={b.n} aria-label={b.n} className="flex w-4 items-center justify-center">
              <svg viewBox="0 0 16 16" className="size-3" fill="#555">{b.d}</svg>
            </button>
          ))}
        </div>
        <div className="flex">
          {[
            { n: "엑셀 저장", d: <><path d="M1 2h14v12H1z" fill="#d8f0d8" stroke="#2c8040" strokeWidth="1.500" /><path d="M4 5l6 6M10 5l-6 6" stroke="#1f7a3a" strokeWidth="2.200" /></> },
            { n: "저장하기", d: <><path d="M2 2h12v12H2z" fill="#8498b4" stroke="#304060" /><path d="M4 2h8v5H4zM5 10h6v4H5z" fill="#fff" stroke="none" /></> },
            { n: "차트 보기", d: <><path d="M1 1h14v14H1z" fill="#fff" strokeWidth="1.500" /><path d="M8 1v14M2 12l3-5 2 3" /><path d="M9 9l2-4 3 2" stroke={R} /><path d="M10 12h4" stroke="#2c8040" strokeWidth="2" /></> },
            { n: "분할 보기", d: <><path d="M1 2h14v12H1zM1 9h14M8 9v5" fill="#fff" strokeWidth="1.500" /><path d="M2 7l3-3 3 3 3-3 3 2" stroke={R} /></> },
            { n: "뒤로", d: <path d="M2 8l6-5v3h6v4H8v3z" fill="#555" stroke="none" /> },
            { n: "직각선", d: <path d="M4 2v11h10" stroke="#203880" strokeWidth="2.500" /> },
            { n: "앞으로", d: <path d="M14 8L8 3v3H2v4h6v3z" fill="#555" stroke="none" /> },
            { n: "차트 도구", d: <><path d="M1 15h14M2 13l3-7 3 5M6 3l4-2 5 3-3 1v9h-2V5z" /><path d="M2 10l4-4 3 3" stroke={R} /></> },
          ].map((b) => (
            <button key={b.n} aria-label={b.n} className="flex w-4 items-center justify-center">
              <Icon box={16} size="size-3.5">{b.d}</Icon>
            </button>
          ))}
        </div>
      </div>
    </div>
  );
}

/* ---------- window ---------- */

function TitleBar() {
  return (
    <header className="flex h-[22px] shrink-0 items-center border-t border-[#45454d] bg-[#ccd7e3] pr-2 pl-px text-[13px] text-[#222]">
      <span className="flex size-3.5 items-center justify-center border border-[#6a3c00] bg-[#c06c08] text-xs leading-3 font-bold text-white">1</span>
      <button aria-label="도움말 보기" className="ml-px flex size-3.5 items-center justify-center border border-[#444] bg-[#888] text-xs leading-3 font-bold text-white">?</button>
      <h1 className="ml-1 leading-5">[0560] 주식차트</h1>
      <div className="ml-auto flex items-center gap-1">
        <button aria-label="창 분리"><Icon size="size-3.5" box={14}><path d="M4 4h9v9H4zM4 6h9M1 1l2 2M1 1h2M1 1v2M9 1h2v2" stroke="#667" /></Icon></button>
        <button aria-label="창 복사"><Icon size="size-3.5" box={14}><path d="M4 4V1h9v9h-3M1 4h9v9H1zM1 6h9M3.500 9l2 2 3-3" stroke="#667" /></Icon></button>
        <button aria-label="화면 캡처"><Icon size="size-3.5" box={14}><path d="M1 4h3l1-2h4l1 2h3v9H1zM7 6l2.500 2.500L7 11 4.500 8.500z" stroke="#667" /></Icon></button>
        <button aria-label="화면 설정"><Icon size="size-3.5" box={14}><path d="M7 1v12M1 7h12M3 3l8 8M11 3l-8 8" stroke="#445" strokeWidth="1.600" /><circle cx="7" cy="7" r="1.600" fill="#ccd7e3" /></Icon></button>
        <button aria-label="최소화" className="ml-1"><Icon size="size-3.5" box={14}><path d="M2 11.500h10" stroke="#333" strokeWidth="2" /></Icon></button>
        <button aria-label="최대화"><Icon size="size-3.5" box={14}><path d="M2 3h10v8H2z" stroke="#333" strokeWidth="2" /></Icon></button>
        <button aria-label="닫기"><Icon size="size-3.5" box={14}><path d="M2 2l10 10M12 2L2 12" stroke="#333" strokeWidth="2" /></Icon></button>
      </div>
    </header>
  );
}

export default function App() {
  return (
    <div className="relative flex min-h-screen w-full flex-col border-b-2 border-[#45454d] bg-white font-['Noto_Sans_CJK_KR',sans-serif] text-black">
      <TitleBar />
      <div className="mt-1 mr-1 mb-0.5 ml-px flex flex-1 flex-col border border-[#909898]">
        <Toolbar />
        <QuoteRow />
        <main className="flex flex-1 pr-0.5 pb-1 pl-0.5">
          <div id="charts" className="flex flex-1 flex-col border border-[#78808c] bg-[#fafafa]">
            <div className="mt-0.5 mr-px ml-[3px] flex flex-1 flex-col border-t border-l border-[#a0a0a0]">
              <PricePanel />
              <VolumePanel />
              <TurnoverPanel />
              <NoticePanel />
              <DateAxis />
            </div>
            <BottomBar />
          </div>
          <SideColumns />
        </main>
      </div>
      <div className="absolute inset-y-0 right-0 w-px bg-[#45454d]" />
      <div className="absolute top-[437px] right-0 h-3 w-2.5 border border-r-0 border-black bg-[#d0f8a0]" />
    </div>
  );
}
